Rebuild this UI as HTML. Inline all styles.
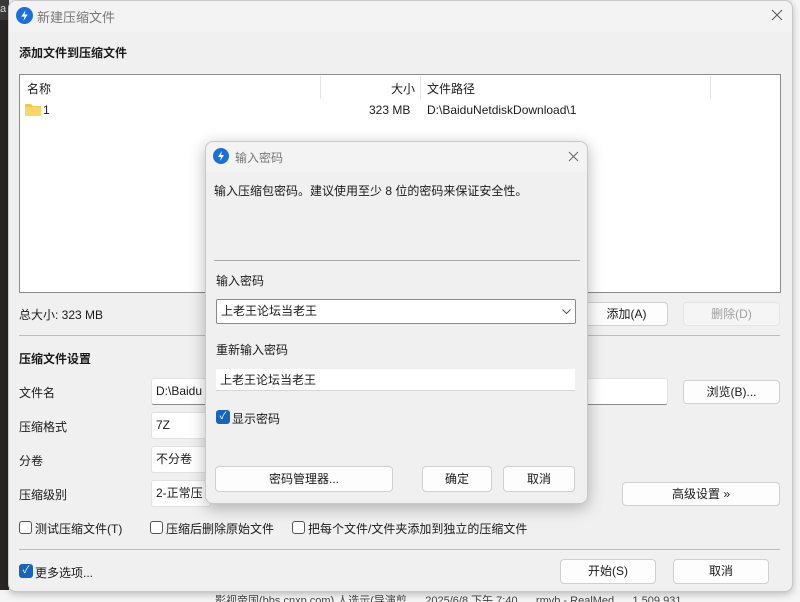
<!DOCTYPE html>
<html><head><meta charset="utf-8"><style>
*{box-sizing:border-box;margin:0;padding:0}
body{width:800px;height:602px;overflow:hidden;background:#f3f3f3;font-family:"Liberation Sans","Noto Sans CJK SC",sans-serif;font-size:12px;color:#1a1a1a;position:relative}
.a{position:absolute;white-space:nowrap}
.btn{position:absolute;background:#fdfdfd;border:1px solid #d0d0d0;border-radius:4px;text-align:center;font-size:12px}
.inp{position:absolute;background:#fff;border:1px solid #e2e2e2;border-bottom:1px solid #8a8a8a;border-radius:3px;padding-left:4px}
.cb{position:absolute;width:13px;height:13px;border:1px solid #555;border-radius:3px;background:#fff}
.cbc{position:absolute;width:14px;height:14px;border-radius:3px;background:#1a64b8;color:#fff;font-size:10px;line-height:14px;text-align:center}
.b{font-weight:bold}
</style></head><body>
<div class="a" style="left:0;top:0;width:9px;height:602px;background:#2a2624"></div>
<div class="a" style="left:0;top:0;width:9px;height:20px;background:#3a3a3a;color:#ddd;font-size:11px;line-height:18px">a</div>
<div class="a" style="left:792px;top:0;width:8px;height:602px;background:#f7f7f7"></div>
<div class="a" style="left:0;top:590px;width:800px;height:12px;background:#f5f5f5;color:#444;font-size:11px;line-height:22px;overflow:hidden"><span style="margin-left:215px">影视帝国(bbs.cnxp.com).人选示(导演剪...&nbsp;&nbsp; 2025/6/8 下午 7:40&nbsp;&nbsp;&nbsp;&nbsp;&nbsp; rmvb - RealMed...&nbsp;&nbsp; 1,509,931</span></div>
<!-- main window -->
<div class="a" style="left:8px;top:0;width:785px;height:592px;background:#f0f0f0;border:1px solid #c8c8c8;border-radius:8px;box-shadow:0 2px 8px rgba(0,0,0,.25)"></div>
<div class="a" style="left:9px;top:1px;width:783px;height:31px;background:#f3f3f3;border-radius:8px 8px 0 0"></div>
<svg class="a" style="left:16px;top:7px" width="17" height="17" viewBox="0 0 16 16"><circle cx="8" cy="8" r="8" fill="#1d6fd6"/><path d="M9 3 5 9h3l-1 4 4-6H8z" fill="#fff"/></svg>
<div class="a" style="left:37px;top:7px;color:#777;font-size:13px">新建压缩文件</div>
<svg class="a" style="left:771px;top:9px" width="12" height="12"><path d="M1 1l10 10M11 1 1 11" stroke="#555" stroke-width="1"/></svg>
<div class="a b" style="left:19px;top:44px;font-size:12px">添加文件到压缩文件</div>
<div class="a" style="left:19px;top:74px;width:762px;height:219px;background:#fff;border:1px solid #8c8c8c"></div>
<div class="a" style="left:320px;top:76px;width:1px;height:23px;background:#e5e5e5"></div>
<div class="a" style="left:420px;top:76px;width:1px;height:23px;background:#e5e5e5"></div>
<div class="a" style="left:710px;top:76px;width:1px;height:23px;background:#e5e5e5"></div>
<div class="a" style="left:27px;top:80px">名称</div>
<div class="a" style="left:391px;top:80px">大小</div>
<div class="a" style="left:427px;top:80px">文件路径</div>
<svg class="a" style="left:25px;top:102px" width="16" height="14"><path d="M0 2h6l2 2h8v10H0z" fill="#f2c74e"/><path d="M0 5h16v9H0z" fill="#fad66a"/></svg>
<div class="a" style="left:43px;top:103px">1</div>
<div class="a" style="left:369px;top:103px">323 MB</div>
<div class="a" style="left:427px;top:103px">D:\BaiduNetdiskDownload\1</div>
<div class="a" style="left:19px;top:306px">总大小: 323 MB</div>
<div class="btn" style="left:585px;top:302px;width:83px;height:24px;line-height:22px">添加(A)</div>
<div class="btn" style="left:683px;top:302px;width:97px;height:24px;line-height:22px;background:#f5f5f5;color:#a0a0a0;border-color:#e5e5e5">删除(D)</div>
<div class="a" style="left:19px;top:335px;width:761px;height:1px;background:#bdbdbd"></div>
<div class="a b" style="left:19px;top:350px">压缩文件设置</div>
<div class="a" style="left:19px;top:384px">文件名</div>
<div class="inp" style="left:151px;top:378px;width:517px;height:27px;line-height:25px">D:\Baidu</div>
<div class="btn" style="left:683px;top:380px;width:97px;height:24px;line-height:22px">浏览(B)...</div>
<div class="a" style="left:19px;top:418px">压缩格式</div>
<div class="inp" style="left:151px;top:412px;width:60px;height:27px;line-height:25px;border-bottom-color:#e2e2e2">7Z</div>
<div class="a" style="left:19px;top:452px">分卷</div>
<div class="inp" style="left:151px;top:446px;width:60px;height:27px;line-height:25px;border-bottom-color:#e2e2e2">不分卷</div>
<div class="a" style="left:19px;top:486px">压缩级别</div>
<div class="inp" style="left:151px;top:480px;width:60px;height:27px;line-height:25px;border-bottom-color:#e2e2e2">2-正常压</div>
<div class="btn" style="left:622px;top:482px;width:158px;height:24px;line-height:22px">高级设置 »</div>
<div class="cb" style="left:19px;top:521px"></div><div class="a" style="left:35px;top:520px">测试压缩文件(T)</div>
<div class="cb" style="left:150px;top:521px"></div><div class="a" style="left:166px;top:520px">压缩后删除原始文件</div>
<div class="cb" style="left:292px;top:521px"></div><div class="a" style="left:308px;top:520px">把每个文件/文件夹添加到独立的压缩文件</div>
<div class="a" style="left:19px;top:549px;width:761px;height:1px;background:#bdbdbd"></div>
<div class="cbc" style="left:19px;top:564px">✓</div><div class="a" style="left:35px;top:564px">更多选项...</div>
<div class="btn" style="left:560px;top:559px;width:96px;height:25px;line-height:23px">开始(S)</div>
<div class="btn" style="left:673px;top:559px;width:96px;height:25px;line-height:23px">取消</div>
<!-- dialog -->
<div class="a" style="left:205px;top:141px;width:383px;height:363px;background:#f0f0f0;border:1px solid #c8c8c8;border-radius:8px;box-shadow:0 4px 16px rgba(0,0,0,.28)"></div>
<div class="a" style="left:206px;top:142px;width:381px;height:30px;background:#f3f3f3;border-radius:8px 8px 0 0"></div>
<svg class="a" style="left:213px;top:148px" width="16" height="16" viewBox="0 0 16 16"><circle cx="8" cy="8" r="8" fill="#1d6fd6"/><path d="M9 3 5 9h3l-1 4 4-6H8z" fill="#fff"/></svg>
<div class="a" style="left:235px;top:149px;color:#777">输入密码</div>
<svg class="a" style="left:568px;top:151px" width="11" height="11"><path d="M1 1l9 9M10 1 1 10" stroke="#666" stroke-width="1"/></svg>
<div class="a" style="left:214px;top:182px">输入压缩包密码。建议使用至少 8 位的密码来保证安全性。</div>
<div class="a" style="left:214px;top:260px;width:366px;height:1px;background:#a8a8a8"></div>
<div class="a" style="left:216px;top:272px">输入密码</div>
<div class="a" style="left:216px;top:299px;width:360px;height:25px;background:#fff;border:1px solid #8a8a8a;border-radius:2px;padding-left:4px;line-height:23px">上老王论坛当老王</div>
<svg class="a" style="left:562px;top:309px" width="9" height="6"><path d="M.5.5 4.5 4.5 8.5.5" stroke="#555" fill="none"/></svg>
<div class="a" style="left:216px;top:341px">重新输入密码</div>
<div class="a" style="left:216px;top:369px;width:359px;height:22px;background:#fff;border-bottom:1px solid #d6d6d6;padding-left:4px;line-height:22px">上老王论坛当老王</div>
<div class="cbc" style="left:216px;top:410px">✓</div><div class="a" style="left:232px;top:410px">显示密码</div>
<div class="btn" style="left:215px;top:466px;width:178px;height:26px;line-height:24px">密码管理器...</div>
<div class="btn" style="left:422px;top:466px;width:70px;height:26px;line-height:24px">确定</div>
<div class="btn" style="left:503px;top:466px;width:72px;height:26px;line-height:24px">取消</div>
</body></html>
